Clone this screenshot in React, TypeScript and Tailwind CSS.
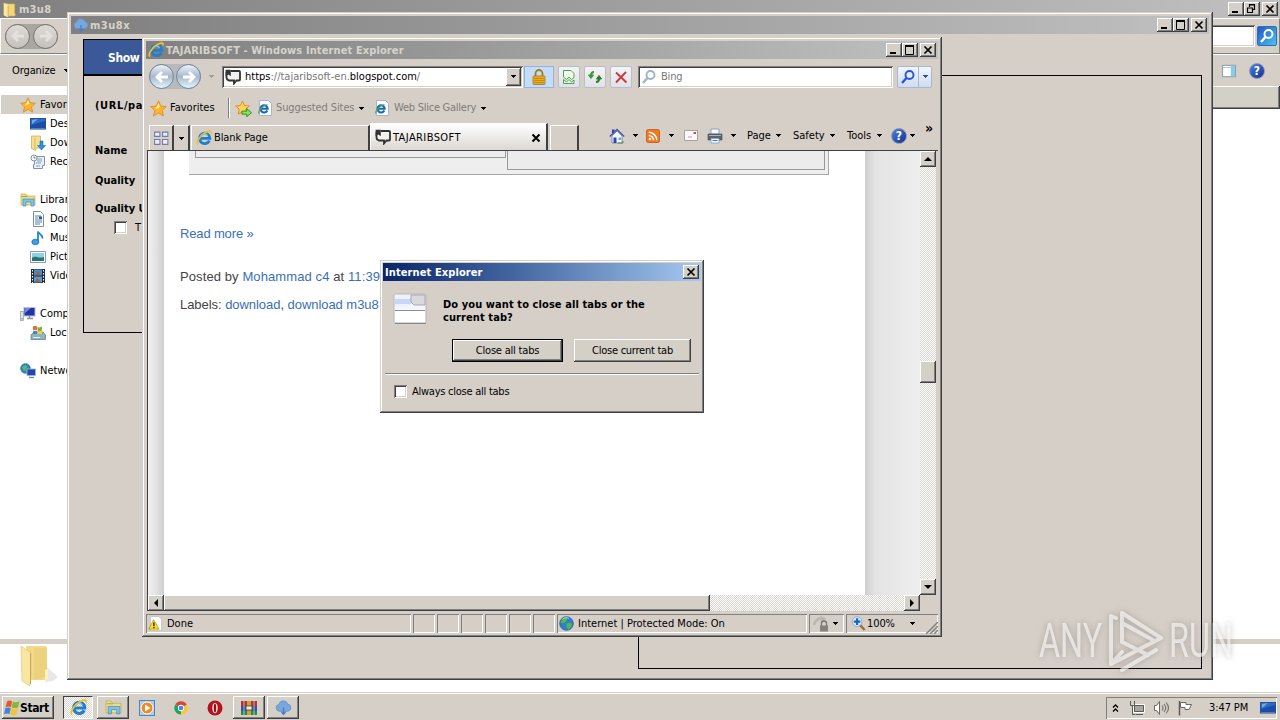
import type { ReactNode } from "react";
import clsx from "clsx";

const raised = "bg-[#d4d0c8] shadow-[inset_-1px_-1px_0_#404040,inset_1px_1px_0_#fff,inset_-2px_-2px_0_#808080]";
const frame = "bg-[#d6cfc8] shadow-[inset_-1px_-1px_0_#404040,inset_1px_1px_0_#d4d0c8,inset_-2px_-2px_0_#808080,inset_2px_2px_0_#fff]";
const sunken = "shadow-[inset_1px_1px_0_#808080,inset_-1px_-1px_0_#fff]";
const field = "bg-white shadow-[inset_1px_1px_0_#808080,inset_-1px_-1px_0_#fff,inset_2px_2px_0_#404040,inset_-2px_-2px_0_#d4d0c8]";
const checker = "bg-[repeating-conic-gradient(#fff_0_25%,#d9d5ce_0_50%)] bg-[length:2px_2px]";

type IconProps = { className?: string };

function Svg({ className, children, box = "0 0 16 16" }: IconProps & { children: ReactNode; box?: string }) {
  return (
    <svg viewBox={box} className={clsx("shrink-0", className ?? "size-4")} fill="none">
      {children}
    </svg>
  );
}

const IeIcon = ({ className }: IconProps) => (
  <Svg className={className}>
    <path d="M13.400 10.600A5.200 5.200 0 1 1 13.900 8.400H5" stroke="#1f7fd0" strokeWidth="2.900" />
    <path d="M4.800 6.200a3.800 3.800 0 0 1 6.800-.4" stroke="#6fd0fa" strokeWidth="1.300" />
    <path d="M2 14.500C-1 12.500 5 4 12.200 1.300c2.600-1 3.400.2 2.600 2.200" stroke="#f0bf2c" strokeWidth="1.700" />
  </Svg>
);

const IePageIcon = ({ className }: IconProps) => (
  <Svg className={className}>
    <path d="M2.500.5h9l3 3v12h-12z" fill="#fdfdfd" stroke="#a9b5c4" />
    <path d="M10.300 10.500a3.600 3.600 0 1 1 .4-1.700H4.500" stroke="#1769b8" strokeWidth="2.100" />
    <path d="M2 13.500c-1.500-1.500 3-8 8.500-9" stroke="#5aa93a" strokeWidth="1.100" />
  </Svg>
);

const StarIcon = ({ className }: IconProps) => (
  <Svg className={className}>
    <path d="M8 .8l2.200 4.900 5.200.5-3.900 3.600 1.200 5.300L8 12.300l-4.700 2.800 1.200-5.300L.6 6.200l5.200-.5z" fill="#fbb52c" stroke="#dd8a24" strokeWidth=".8" />
    <path d="M8 3l1.300 3.600L5 9z" fill="#fff0a0" />
  </Svg>
);

const AddStarIcon = () => (
  <Svg className="size-[17px]">
    <path d="M7 1l1.900 4.200 4.500.4-3.400 3.100 1 4.600-4-2.400-4 2.400 1-4.600L.6 5.600l4.500-.4z" fill="#fbd458" stroke="#d9821a" strokeWidth=".8" />
    <path d="M6.500 10.500h4.500V8l4.500 4-4.500 3.700v-2.400H6.500z" fill="#8fe05a" stroke="#2c8a22" strokeWidth=".9" />
  </Svg>
);

const CloudIcon = ({ className }: IconProps) => (
  <Svg className={className}>
    <path d="M4 11.500a3.300 3.300 0 0 1-.3-6.500A4.300 4.300 0 0 1 12 4.800a3.400 3.400 0 0 1 .2 6.700z" fill="#78a6df" stroke="#6593d0" strokeWidth=".8" />
    <path d="M8 8v6M6 12l2 2.500 2-2.500" stroke="#4b7fc6" strokeWidth="1.300" />
  </Svg>
);

const FolderIcon = ({ className }: IconProps) => (
  <Svg className={className}>
    <path d="M2 1l5 1h6.500v10l1 1-1 2H7l-1 1-4-2z" fill="#f3d778" stroke="#d2ae4a" strokeWidth=".6" />
    <path d="M2 1l4.500 3v12L2 14z" fill="#fbeaa4" />
    <path d="M6.500 4v11" stroke="#c8a445" strokeWidth=".8" />
  </Svg>
);

const BigFolderIcon = () => (
  <svg viewBox="0 0 40 44" className="h-11 w-10">
    <path d="M27 22l10 9c1 3-5 6-12 6z" fill="#d9d9d9" opacity=".6" />
    <path d="M6 1h20l1 2v24l1 3v4l-5 1H10z" fill="#f0d987" />
    <path d="M14 3h13v28l-13 4z" fill="#ecd27c" />
    <path d="M25 25l3-1v10l-3 1z" fill="#fff3c4" />
    <path d="M1 1l9 6q1 1 1 3v18l-1 13L2 36z" fill="#f8e6a2" stroke="#dcc06a" strokeWidth=".6" />
    <path d="M10.500 8v31" stroke="#c7a654" />
  </svg>
);

const LibraryIcon = ({ className }: IconProps) => (
  <Svg className={className}>
    <path d="M1 2h5l1 2h8v9H1z" fill="#f5dc84" stroke="#c9a84a" strokeWidth=".7" />
    <path d="M3 7h11v7h-3v-4H6v4H3z" fill="#7cc4ec" stroke="#3d8fc4" strokeWidth=".7" />
    <path d="M1.500 4.500h6" stroke="#7cb84a" />
  </Svg>
);

const MonitorIcon = ({ className }: IconProps) => (
  <Svg className={className}>
    <rect x=".5" y="2.500" width="15" height="10.500" fill="#2a6ccc" stroke="#27508f" />
    <path d="M1 12.500V9L15 5v7.500z" fill="#1d4ca6" />
    <path d="M2 4l6-1-6 5z" fill="#6faaf0" />
    <path d="M1 12.800h14" stroke="#6a8fc0" />
  </Svg>
);

const DownloadsIcon = () => (
  <Svg>
    <path d="M1.500 1h9v12h-4l-1 2.500-4-2z" fill="#f6df8e" stroke="#c9a84a" strokeWidth=".7" />
    <path d="M5 3v11" stroke="#d8b95c" />
    <path d="M10 6h3v4.500h2.500l-4 4.500-4-4.500H10z" fill="#2f8fe0" stroke="#1769b8" strokeWidth=".6" />
  </Svg>
);

const RecentIcon = () => (
  <Svg>
    <path d="M4.500 2.500h10v9h-2v3h-9v-4h1z" fill="#eaf0f6" stroke="#7f94aa" />
    <path d="M7 5h5M7 7h5M6 9h5M6 12h4" stroke="#7fa0c4" />
    <circle cx="4" cy="4" r="3" fill="#f6f9fc" stroke="#8597a8" />
    <path d="M4 2.500V4h1.500" stroke="#555" strokeWidth=".8" />
  </Svg>
);

const DocumentIcon = () => (
  <Svg>
    <path d="M3.500.5h7l3 3v12h-10z" fill="#fff" stroke="#7f8fa4" />
    <path d="M5 5h6M5 7h3M5 9h7M5 11h7M5 13h5" stroke="#557fb5" />
    <path d="M9 5.500h3v2.500H9z" fill="#31549a" />
  </Svg>
);

const MusicIcon = () => (
  <Svg>
    <path d="M8 12V1.500c1 3 5 3 4.500 7" stroke="#2586cf" strokeWidth="1.800" />
    <ellipse cx="5.300" cy="12" rx="3.500" ry="2.800" fill="#3c9fe2" stroke="#1769b8" strokeWidth=".7" />
  </Svg>
);

const PictureIcon = () => (
  <Svg>
    <path d="M.5 2.500h15v11H.5z" fill="#fff" stroke="#8d9aa8" />
    <path d="M2 4h12v8H2z" fill="#8cd0ee" />
    <path d="M2 9c4-3 6 1 12-1v4H2z" fill="#28766a" />
  </Svg>
);

const VideoIcon = () => (
  <Svg>
    <path d="M1 1h14v14H1z" fill="#242c38" />
    <path d="M4 1.500h8v6H4z" fill="#3f8fd0" />
    <path d="M4 8.500h8v6H4z" fill="#4aa0d8" />
    <path d="M5 7l3-4 3 4zM5 14l2-4 4 4z" fill="#b65a35" />
    <path d="M2.500 2v13M13.500 2v13" stroke="#fff" strokeDasharray="1.500 1.500" />
  </Svg>
);

const ComputerIcon = () => (
  <Svg>
    <rect x="4" y="1.500" width="11" height="8.500" fill="#2332a5" stroke="#b6bec8" />
    <path d="M5 2h6l-6 5z" fill="#6f88ea" />
    <path d="M7 12.500h6M9.500 10v2" stroke="#8a949e" strokeWidth="1.500" />
    <rect x=".5" y="5.500" width="3" height="9" fill="#e0e4e8" stroke="#8d98a4" strokeWidth=".7" />
    <path d="M2 12v1.500" stroke="#43b02a" />
  </Svg>
);

const FlagIcon = ({ className }: IconProps) => (
  <Svg className={className}>
    <path d="M3 1.500C5 .2 6.500.4 8 1.200L7 7.200C5.300 6.400 3.300 6.400 1.500 7.400z" fill="#e8562a" />
    <path d="M8.800 1.600c2 .9 4.200.8 6.700-.4l-1.500 6c-2 1.100-4.300 1-6.200.3z" fill="#86b832" />
    <path d="M1.300 8.300c1.700-1 3.800-1 5.500-.2l-1.300 6c-1.700-.9-3.700-.8-5.500.2z" fill="#3f86d8" />
    <path d="M7.600 8.500c2 .8 4.100.8 6.200-.3l-1.400 6c-2 1.100-4.200 1.100-6.100.3z" fill="#f7c32c" />
  </Svg>
);

const DriveIcon = () => (
  <Svg>
    <path d="M1 10l3-3h9l2.500 3v4.500H1z" fill="#8fb4bc" stroke="#587a88" strokeWidth=".7" />
    <path d="M3 12.500h7" stroke="#dff1ff" />
    <path d="M3 1.500c2-1 3-.8 4 0v4c-1-.6-2.500-.6-4 0z" fill="#ef6a2c" />
    <path d="M7.500 2c1.500.6 3 .5 4.500-.4v4c-1.500.8-3 .9-4.500.3z" fill="#7cb342" />
    <path d="M7.500 6.200c1.500.6 3 .5 4.500-.3v3H7.500z" fill="#fbc72f" />
    <path d="M3 6.300c1.500-.8 3-.8 4-.1v2.700H3z" fill="#3f86d8" />
  </Svg>
);

const GlobeIcon = ({ className }: IconProps) => (
  <Svg className={className}>
    <circle cx="8" cy="8" r="7.300" fill="#2c7ed0" stroke="#1c4f94" strokeWidth=".7" />
    <path d="M3 4c2-3 5-2.500 6-1L7.500 6 4 8 1.500 7zM8 8l4-1 2 2-2 4-2.500 1.500L8 11z" fill="#54b848" />
    <path d="M4 3.500c2-2 5-2 6.500-1" stroke="#bfe8ff" />
  </Svg>
);

const NetworkIcon = () => (
  <Svg>
    <circle cx="5.500" cy="5.500" r="4.800" fill="#2c8ad0" stroke="#1c6094" strokeWidth=".7" />
    <path d="M2 4l4-2 1 3-3 3zM6 7l3-1v3l-2 1z" fill="#63be4c" />
    <rect x="7" y="6" width="8.500" height="6.500" fill="#1d48b4" stroke="#a8b4c0" strokeWidth=".8" />
    <path d="M9 14.500h5" stroke="#7d8894" strokeWidth="1.400" />
  </Svg>
);

const ChatIcon = ({ className }: IconProps) => (
  <Svg className={className}>
    <path d="M6 2h8q1 0 1 1v7.500q0 1-1 1h-2.500l-2.500 3v-3H4q-2.500-.5-2.500-3.500V3" fill="#f4f2ee" stroke="#333" strokeWidth="1.800" />
    <path d="M.6.8h5.200v6.500L3.300 5.500.6 7.300z" fill="#333" />
  </Svg>
);

const LockIcon = () => (
  <Svg className="size-4">
    <path d="M4.500 8V4.500a3.500 3.500 0 0 1 7 0V8" stroke="#a07c1c" strokeWidth="1.800" />
    <rect x="2" y="7" width="12" height="8.500" rx=".8" fill="#e8ad22" stroke="#a8760c" strokeWidth=".8" />
    <path d="M3 9.500h10M3 11.500h10M3 13.500h10" stroke="#bb8310" strokeWidth=".8" />
  </Svg>
);

const CompatIcon = () => (
  <Svg>
    <path d="M2.500 1.500h7.500l3 3v4l-2.500 2-2.500-2.500-2.500 2.500-3-2.500zM2.500 10.500l3 2.500L8 10.500l2.500 2.500 2.500-2v3.500H2.500z" fill="#eefaea" stroke="#3c9a3c" strokeWidth=".9" />
  </Svg>
);

const RefreshIcon = () => (
  <Svg>
    <path d="M1.500 6h5L4 9.500z" fill="#3a9a34" stroke="#3a9a34" />
    <path d="M4 6.500c0-2.500.5-3.500 3-3.500" stroke="#3a9a34" strokeWidth="2" />
    <path d="M9.500 10h5L12 6.500z" fill="#267c28" stroke="#267c28" />
    <path d="M12 9.500c0 2.500-.5 3.500-3 3.500" stroke="#267c28" strokeWidth="2" />
  </Svg>
);

const StopIcon = () => (
  <Svg>
    <path d="M3 3.500l10.500 10M13 3L3 13.500" stroke="#c83a46" strokeWidth="1.900" />
  </Svg>
);

const SearchIcon = ({ className, color = "#2358d8" }: IconProps & { color?: string }) => (
  <Svg className={className}>
    <circle cx="9.500" cy="6" r="4" stroke={color} strokeWidth="1.900" />
    <path d="M6.500 9L2 14" stroke={color} strokeWidth="2.400" />
  </Svg>
);

const HomeIcon = () => (
  <Svg>
    <path d="M3 1.500h2.500v4H3z" fill="#3b3bb8" />
    <path d="M3 8l5-5 5 5v7H3z" fill="#f5f7ff" stroke="#6c7ca8" strokeWidth=".8" />
    <path d="M.8 8.500L8 1.500l7.200 7" stroke="#3f58b0" strokeWidth="1.300" />
    <path d="M4.500 9.500h3V15h-3z" fill="#2847c0" />
    <path d="M9.500 9.500h2.500V12H9.500z" fill="#6ba8e8" />
    <path d="M9 15h5v-2" stroke="#4a9a3a" />
  </Svg>
);

const RssIcon = () => (
  <Svg className="size-[14px]">
    <rect x=".5" y=".5" width="15" height="15" rx="2.500" fill="#f07a24" stroke="#c9560f" />
    <circle cx="4.500" cy="11.500" r="1.400" fill="#fff" />
    <path d="M3.200 7.500a5.200 5.200 0 0 1 5.300 5.300M3.200 3.800a9 9 0 0 1 9 9" stroke="#fff" strokeWidth="1.700" />
  </Svg>
);

const MailIcon = () => (
  <Svg box="0 0 14 11" className="h-[11px] w-[14px]">
    <path d="M.5.5h13v10H.5z" fill="#fafafa" stroke="#a8a29c" />
    <path d="M9.500 2H12v2H9.500z" fill="#d84a4a" />
    <path d="M4 7h4" stroke="#c99" />
  </Svg>
);

const PrinterIcon = () => (
  <Svg>
    <path d="M4 1h8v5H4z" fill="#f4f8fc" stroke="#8492a4" strokeWidth=".8" />
    <path d="M1 6h14v6H1z" fill="#5c646e" stroke="#3f464e" strokeWidth=".6" />
    <path d="M2 7.500h12" stroke="#a8b0ba" />
    <path d="M4 10.500h8V15H4z" fill="#f4f8fc" stroke="#7aa2d0" strokeWidth=".8" />
    <path d="M5.500 12.500h5" stroke="#3f7cc4" />
  </Svg>
);

function HelpIcon({ className }: IconProps) {
  return (
    <span className={clsx("flex size-4 shrink-0 items-center justify-center rounded-full border border-[#8d99b4] bg-linear-to-br from-[#5480dc] to-[#122f94] text-[12px] leading-none font-bold text-white", className)}>
      ?
    </span>
  );
}

const WarnPageIcon = () => (
  <Svg className="size-[15px]">
    <path d="M2.500.5h9l3 3v12h-12z" fill="#fff" stroke="#c4c4c4" />
    <path d="M6 4L.8 14h11z" fill="#fbe022" stroke="#a8920c" strokeWidth=".8" />
    <path d="M6.300 7v3.700M6.300 11.500V13" stroke="#222" strokeWidth="1.400" />
  </Svg>
);

function Caret({ className }: IconProps) {
  return (
    <svg viewBox="0 0 5 3" className={clsx("h-[3px] w-[5px] shrink-0", className)} shapeRendering="crispEdges">
      <path d="M0 0h5L2.500 3z" fill="currentColor" />
    </svg>
  );
}

function Glyph({ kind }: { kind: string }) {
  return (
    <svg viewBox="0 0 16 14" className="h-[14px] w-4" fill="none" stroke="#000">
      {kind === "min" && <path d="M4 10h6" strokeWidth="2" />}
      {kind === "max" && (
        <>
          <path d="M3.500 3v8.500h8V3" />
          <path d="M3 3h9" strokeWidth="2" />
        </>
      )}
      {kind === "restore" && <path d="M5.500 5V2.500h5v5H9M5 3h6M3.500 6v4.500h5V6M3 6h6" strokeWidth="1.200" />}
      {kind === "close" && <path d="M4.500 3.500l7 7M11.500 3.500l-7 7" strokeWidth="1.700" />}
    </svg>
  );
}

function WindowButtons({ middle = "max" }: { middle?: string }) {
  return (
    <div className="ml-auto flex shrink-0">
      <button className={raised}><Glyph kind="min" /></button>
      <button className={raised}><Glyph kind={middle} /></button>
      <button className={clsx(raised, "ml-[2px]")}><Glyph kind="close" /></button>
    </div>
  );
}

function TitleBar({ icon, title, middle, className, tracking }: { icon: ReactNode; title: string; middle?: string; className?: string; tracking?: string }) {
  return (
    <div className={clsx("flex shrink-0 items-center bg-linear-to-r from-[#808080] to-[#c0c0c0]", className)}>
      {icon}
      <span className={clsx("pt-[2px] text-[11px] font-bold text-[#d6d2ca]", tracking)}>{title}</span>
      <WindowButtons middle={middle} />
    </div>
  );
}

function Arrow({ flip, muted }: { flip?: boolean; muted?: boolean }) {
  return (
    <span className={clsx("flex size-[25px] items-center justify-center rounded-full border", muted ? "border-[#77736e] bg-linear-to-b from-[#dedbd7] to-[#c4c1bd]" : "border-[#71849a] bg-linear-to-b from-[#eef3f9] via-[#a8b8cc] to-[#e2f5fb]")}>
      <svg viewBox="0 0 16 16" className={clsx("size-4", flip && "-scale-x-100")} fill="none">
        <path d="M14 8H3.500M8 3L3 8l5 5" stroke={muted ? "#e3e1dd" : "#fff"} strokeWidth="2.800" />
      </svg>
    </span>
  );
}

const places = [
  { name: "Favorites", icon: <StarIcon />, top: true },
  { name: "Desktop", icon: <MonitorIcon /> },
  { name: "Downloads", icon: <DownloadsIcon /> },
  { name: "Recent", icon: <RecentIcon /> },
  null,
  { name: "Libraries", icon: <LibraryIcon />, top: true },
  { name: "Documents", icon: <DocumentIcon /> },
  { name: "Music", icon: <MusicIcon /> },
  { name: "Pictures", icon: <PictureIcon /> },
  { name: "Videos", icon: <VideoIcon /> },
  null,
  { name: "Computer", icon: <ComputerIcon />, top: true },
  { name: "Local Disk", icon: <DriveIcon /> },
  null,
  { name: "Network", icon: <NetworkIcon />, top: true },
];

function ExplorerWindow() {
  return (
    <div className="absolute inset-x-0 top-0 flex h-[693px] flex-col bg-white">
      <TitleBar className="h-[18px] pr-[2px]" middle="restore" icon={<FolderIcon className="mx-[2px] size-[15px]" />} title="m3u8" tracking="tracking-[0.3px]" />
      <div className="flex h-[36px] items-center border border-t-white border-r-[#808080] border-b-[#808080] border-l-white bg-[#d6cfc8] pr-[2px] pl-1">
        <div className="flex gap-[3px] rounded-full bg-[#a9a6a2]">
          <Arrow muted />
          <Arrow muted flip />
        </div>
        <div className={clsx(field, "ml-auto h-[22px] w-[160px]")} />
        <span className="ml-[2px] flex size-5 items-center justify-center rounded-[2px] border border-[#2d6fb4] bg-linear-to-br from-[#2b50c8] to-[#4bc6ee]">
          <SearchIcon color="#fff" />
        </span>
      </div>
      <div className="flex h-[32px] items-center border-t border-white bg-[#d6cfc8] pl-3">
        <span className="w-[52px] pt-[2px] text-[11px] tracking-[-0.1px]">Organize</span>
        <Caret />
        <Svg className="mr-3 ml-auto h-[14px] w-4">
          <path d="M.5 1.500h15v13H.5z" fill="#fff" stroke="#6f8fa8" />
          <path d="M10 2h5v12h-5z" fill="#8ccbe4" />
          <path d="M1 4h9" stroke="#a9c4d4" />
        </Svg>
        <HelpIcon className="mr-[15px]" />
      </div>
      <div className="flex grow">
        <div className="w-[67px] shrink-0 overflow-hidden pt-[9px]">
          {places.map((place, i) =>
            place ? (
              <div key={place.name} className={clsx("ml-px flex h-[19px] items-center gap-1 text-[11px]", place.top ? "pl-[19px]" : "pl-[29px]", i === 0 && "bg-[#d4d0c8]")}>
                {place.icon}
                <span className="pt-[2px]">{place.name}</span>
              </div>
            ) : (
              <div key={i} className="h-[19px]" />
            )
          )}
        </div>
        <div className={clsx(raised, "h-[23px] grow")} />
      </div>
      <div className="h-[54px] border-t-[5px] border-[#d6cfc8] pt-px pl-5">
        <BigFolderIcon />
      </div>
    </div>
  );
}

function CheckBox() {
  return <span className={clsx(field, "inline-block size-[13px] shrink-0")} />;
}

function DownloaderWindow() {
  return (
    <div className={clsx(frame, "absolute top-[12px] left-[67px] flex h-[668px] w-[1146px] flex-col p-1")}>
      <TitleBar className="h-[18px] pr-[2px]" icon={<CloudIcon className="mr-px ml-[2px] size-4" />} title="m3u8x" tracking="tracking-[0.5px]" />
      <div className="flex grow pt-[5px] pl-3">
        <div className="h-[294px] w-[555px] border border-black">
          <div className="flex h-[36px] items-center border-b-2 border-black bg-[#3b5998] pt-[2px] pl-6 text-[12px] font-bold tracking-[-0.4px] text-white">Show</div>
          <div className="flex flex-col pl-[11px] text-[11px] leading-[14px] font-bold">
            <span className="mt-[23px] tracking-[0.6px]">(URL/path)</span>
            <span className="mt-[31px] tracking-[0.1px]">Name</span>
            <span className="mt-4">Quality</span>
            <span className="mt-[14px]">Quality URL</span>
            <label className="mt-[3px] flex items-center gap-2 pl-[19px] font-normal tracking-[1px]">
              <CheckBox /> <span className="pt-[2px]">TS</span>
            </label>
          </div>
        </div>
        <div className="mt-9 h-[594px] w-[564px] border border-black" />
      </div>
    </div>
  );
}

function ToolButton({ children }: { children: ReactNode }) {
  return (
    <span className="flex h-[22px] w-[22px] items-center justify-center rounded-[2px] border border-[#b5bfd0] bg-linear-to-b from-[#f4f4f6] to-[#e2e1e6]">
      {children}
    </span>
  );
}

function AddressRow() {
  return (
    <div className="flex h-[35px] shrink-0 items-center pl-[3px] text-[11px]">
      <div className="flex w-[73px] shrink-0 items-center">
        <div className="flex gap-[2px] rounded-full bg-[#b7b9bd]">
          <Arrow />
          <Arrow flip />
        </div>
        <Caret className="ml-[7px] h-1 w-[7px] text-[#a29d97]" />
      </div>
      <div className={clsx(field, "flex h-[22px] w-[301px] items-center pl-[3px]")}>
        <ChatIcon className="mr-[4px] size-4" />
        <span className="pt-[2px] text-[#777]">
          <span className="text-black">https</span>://tajaribsoft-en.<span className="text-black">blogspot.com</span>/
        </span>
        <span className={clsx(raised, "mr-[2px] ml-auto flex h-[18px] w-[15px] items-center justify-center")}>
          <Caret className="h-1 w-[7px]" />
        </span>
      </div>
      <div className="ml-px flex h-[22px] w-[30px] items-center justify-center border border-[#8db4ec] bg-[#c6dcfb]">
        <LockIcon />
      </div>
      <div className="ml-[4px] flex gap-1">
        <ToolButton><CompatIcon /></ToolButton>
        <ToolButton><RefreshIcon /></ToolButton>
        <ToolButton><StopIcon /></ToolButton>
      </div>
      <div className={clsx(field, "ml-[6px] flex h-[22px] w-[255px] items-center pl-[3px] text-[#777]")}>
        <SearchIcon color="#9bb4cc" />
        <span className="ml-1 pt-[2px] tracking-[-0.2px]">Bing</span>
      </div>
      <div className="ml-1 flex h-[22px] w-[35px] items-center rounded-[2px] border border-[#a9b8d2] bg-linear-to-b from-[#f2f5fb] to-[#cfdcf2]">
        <span className="flex h-full w-[21px] items-center justify-center border-r border-[#a9b8d2]"><SearchIcon /></span>
        <Caret className="ml-1 text-[#2050a0]" />
      </div>
    </div>
  );
}

function FavoritesRow() {
  return (
    <div className="flex h-[28px] shrink-0 items-center pl-1 text-[11px]">
      <StarIcon className="size-[17px]" />
      <span className="ml-[3px] w-[58px] pt-px">Favorites</span>
      <span className="mr-[5px] h-5 w-[2px] border-l border-[#808080] bg-white" />
      <AddStarIcon />
      <IePageIcon className="ml-[5px] size-4" />
      <span className="ml-[3px] w-[83px] pt-px tracking-[-0.1px] text-[#807c78]">Suggested Sites</span>
      <Caret />
      <IePageIcon className="ml-[10px] size-4" />
      <span className="ml-[4px] w-[87px] pt-px tracking-[-0.25px] text-[#807c78]">Web Slice Gallery</span>
      <Caret />
    </div>
  );
}

function TabsRow() {
  return (
    <div className="flex h-[28px] shrink-0 items-end text-[11px]">
      <div className="ml-[3px] flex h-[25px] w-[25px] items-center justify-center border-t border-r-2 border-l border-t-white border-r-[#404040] border-l-white">
        <Svg className="size-[17px]">
          <path d="M1.500 2h5v4h-5zM9 2h5v4H9zM1.500 9h5v4.500h-5zM9 9h5v4.500H9z" fill="#eceffa" stroke="#6f7cac" />
        </Svg>
      </div>
      <div className="flex h-[25px] w-4 items-center justify-center border-t border-r-2 border-white border-r-[#404040]"><Caret /></div>
      <div className="ml-px flex h-[25px] w-[179px] items-center border-t border-r-2 border-l border-t-white border-r-[#404040] border-l-white pl-1">
        <IeIcon className="size-4" />
        <span className="ml-[2px] pt-px tracking-[-0.1px]">Blank Page</span>
      </div>
      <div className="flex h-[27px] w-[178px] items-center border-t border-r-2 border-l border-t-white border-r-[#404040] border-l-white bg-linear-to-b from-white to-[#dcd8d2] pl-1">
        <ChatIcon className="size-4" />
        <span className="ml-[2px] pt-[2px] tracking-[0.4px]">TAJARIBSOFT</span>
        <Svg className="mt-[2px] mr-[5px] ml-auto size-[10px]" box="0 0 10 10">
          <path d="M1.500 1.500l7 7M8.500 1.500l-7 7" stroke="#000" strokeWidth="2" />
        </Svg>
      </div>
      <div className="ml-[2px] h-[25px] w-[29px] border-t border-r-2 border-l border-t-white border-r-[#404040] border-l-white" />
      <div className="ml-[30px] flex h-[28px] w-[326px] items-center pb-px">
        <HomeIcon />
        <Caret className="ml-2" />
        <span className="ml-[8px]"><RssIcon /></span>
        <Caret className="ml-[9px]" />
        <span className="ml-[10px]"><MailIcon /></span>
        <span className="ml-[9px]"><PrinterIcon /></span>
        <Caret className="ml-2" />
        <span className="ml-[11px] w-[29px] pt-[2px]">Page</span>
        <Caret />
        <span className="ml-3 w-[37px] pt-[2px]">Safety</span>
        <Caret />
        <span className="ml-[12px] w-[30px] pt-[2px]">Tools</span>
        <Caret />
        <HelpIcon className="ml-[9px]" />
        <Caret className="ml-[3px]" />
        <span className="ml-[10px] pb-[14px] text-[14px] font-bold">»</span>
      </div>
    </div>
  );
}

function ScrollButton({ path, className }: { path: string; className?: string }) {
  return (
    <span className={clsx(raised, "flex size-4 shrink-0 items-center justify-center", className)}>
      <svg viewBox="0 0 8 8" className="size-2"><path d={path} fill="#000" /></svg>
    </span>
  );
}

function BlogPage() {
  return (
    <div className="flex h-[444px] grow overflow-hidden bg-[#eee]">
      <div className="w-4 shrink-0 bg-linear-to-r from-[#f0f0f0] via-[#e2e2e2] to-[#cfcfcf]" />
      <div className="w-[701px] shrink-0 bg-white px-4 font-['Liberation_Sans',Arial,sans-serif] text-[13px] leading-4 tracking-[-0.05px] text-[#444]">
        <div className="ml-[9px] flex h-6 w-[640px] border-r border-b border-[#a8a8a8] bg-[#eee] pr-[3px] pl-[6px]">
          <div className="h-[7px] w-[311px] border-r border-b border-l border-[#999]" />
          <div className="ml-px h-[19px] grow border-r border-b border-l border-[#999] bg-[#ececec]" />
        </div>
        <div className="mt-[51px] tracking-[-0.15px] text-[#3a6fb8]">Read more »</div>
        <div className="mt-[27px] w-[199px] tracking-[0.1px]">
          Posted by <span className="text-[#3a6fb8]">Mohammad c4</span> at <span className="text-[#3a6fb8]">11:39</span>
        </div>
        <div className="mt-3">
          Labels: <span className="text-[#3a6fb8]">download</span>, <span className="text-[#3a6fb8]">download m3u8</span>
        </div>
      </div>
      <div className="grow bg-linear-to-r from-[#cfcfcf] via-[#e4e4e4] via-20% to-[#eee]" />
    </div>
  );
}

function StatusBar() {
  return (
    <div className="mt-[3px] flex h-[19px] shrink-0 gap-[2px] text-[11px]">
      <div className={clsx(sunken, "flex w-[265px] items-center gap-1 pl-[2px]")}>
        <WarnPageIcon />
        <span className="pt-[2px]">Done</span>
      </div>
      {[0, 1, 2, 3, 4, 5].map((n) => (
        <div key={n} className={clsx(sunken, "w-[22px]")} />
      ))}
      <div className={clsx(sunken, "flex w-[250px] items-center pl-[2px]")}>
        <GlobeIcon className="size-[15px]" />
        <span className="ml-1 pt-[2px]">Internet | Protected Mode: On</span>
      </div>
      <div className={clsx(sunken, "flex w-[35px] items-center gap-1 pl-1")}>
        <Svg>
          <path d="M1 9c1-5 6-8 9-6M7 1l4 2-3 3" stroke="#b9b7b4" strokeWidth="2.600" />
          <path d="M8.500 10V7.500a2.500 2.500 0 0 1 5 0V10" stroke="#777" strokeWidth="1.300" />
          <rect x="7" y="9.500" width="8" height="6" fill="#85827e" />
        </Svg>
        <Caret />
      </div>
      <div className={clsx(sunken, "flex grow items-center pl-[5px]")}>
        <Svg className="mr-px size-[15px]">
          <path d="M9.500 9.500l5 5.500" stroke="#a36a3c" strokeWidth="2.500" />
          <circle cx="6.500" cy="6" r="5.200" fill="#d5ecff" stroke="#8ba8c4" />
          <path d="M6.500 2.500v7M3 6h7" stroke="#1762c8" strokeWidth="2.200" />
        </Svg>
        <span className="w-[43px] pt-[2px] tracking-[-0.1px]">100%</span>
        <Caret />
        <Svg className="mt-2 ml-auto size-3" box="0 0 12 12">
          <path d="M0 12L12 0M4 12l8-8M8 12l4-4" stroke="#808080" strokeWidth="1.500" />
        </Svg>
      </div>
    </div>
  );
}

function BrowserWindow() {
  return (
    <div className={clsx(frame, "absolute top-[37px] left-[142px] flex h-[600px] w-[800px] flex-col p-1")}>
      <TitleBar className="h-[18px] pr-[2px]" icon={<IeIcon className="mx-[2px] size-4" />} title="TAJARIBSOFT - Windows Internet Explorer" tracking="tracking-[0.11px]" />
      <AddressRow />
      <FavoritesRow />
      <TabsRow />
      <div className="ml-px flex h-[461px] shrink-0 flex-col border-t border-l border-[#404040]">
        <div className="flex h-[444px]">
          <BlogPage />
          <div className={clsx(checker, "mr-[2px] flex w-4 shrink-0 flex-col")}>
            <ScrollButton path="M0 6l4-4 4 4z" />
            <div className={clsx(raised, "mt-[194px] h-[22px]")} />
            <ScrollButton path="M0 2l4 4 4-4z" className="mt-auto" />
          </div>
        </div>
        <div className="flex h-4">
          <div className={clsx(checker, "flex w-[772px]")}>
            <ScrollButton path="M6 0L2 4l4 4z" />
            <div className={clsx(raised, "w-[546px]")} />
            <ScrollButton path="M2 0l4 4-4 4z" className="ml-auto" />
          </div>
        </div>
      </div>
      <StatusBar />
    </div>
  );
}

function CloseTabsDialog() {
  return (
    <div className={clsx(frame, "absolute top-[260px] left-[380px] flex h-[153px] w-[324px] flex-col p-[3px] text-[11px]")}>
      <div className="flex h-[18px] shrink-0 items-center bg-linear-to-r from-[#0a246a] to-[#a6caf0] pr-[2px] pl-[2px] font-bold text-white">
        <span className="pt-[2px] tracking-[0.1px]">Internet Explorer</span>
        <button className={clsx(raised, "ml-auto")}><Glyph kind="close" /></button>
      </div>
      <div className="flex pt-[12px] pl-[10px]">
        <svg viewBox="0 0 34 32" className="h-8 w-[34px]" fill="none">
          <rect x="1" y="1" width="32" height="29" rx="1.500" fill="#f4f6fc" stroke="#b8b6b4" />
          <path d="M2 2h16v12H2z" fill="#eef2fc" />
          <path d="M2 6h16v5H2z" fill="#c9d6f6" />
          <path d="M18 2h14v10H21l-3-3z" fill="#d9d9dc" stroke="#a8a8ac" />
          <path d="M2 17.500h30" stroke="#8c8c94" />
          <path d="M2 18h30v11H2z" fill="#fff" />
          <path d="M2 30.500h31" stroke="#8c8880" />
        </svg>
        <p className="mt-[5px] ml-[16px] leading-[13px] font-bold tracking-[0.09px]">
          Do you want to close all tabs or the
          <br />
          current tab?
        </p>
      </div>
      <div className="mt-[14px] flex gap-[11px] pl-[69px]">
        <button className={clsx(raised, "h-[23px] w-[111px] border border-black pt-px tracking-[-0.2px]")}>Close all tabs</button>
        <button className={clsx(raised, "h-[23px] w-[117px] pt-px tracking-[-0.25px]")}>Close current tab</button>
      </div>
      <hr className="mx-[2px] mt-[11px] h-[2px] border-t border-b border-t-[#808080] border-b-white" />
      <label className="mt-[8px] flex items-center gap-[5px] pl-[11px] tracking-[-0.25px]">
        <CheckBox />
        <span className="pt-px">Always close all tabs</span>
      </label>
    </div>
  );
}

function TaskIcon({ children, open }: { children: ReactNode; open?: boolean }) {
  return <div className={clsx("flex h-[23px] w-8 items-center justify-center", open && raised)}>{children}</div>;
}

function Taskbar() {
  return (
    <div className="absolute inset-x-0 bottom-0 flex h-[27px] items-center border-t border-white bg-[#d6cfc8] pt-px pl-[2px] shadow-[0_-1px_0_#d4d0c8]">
      <button className={clsx(raised, "flex h-[23px] w-[52px] items-center pl-[2px] text-[12px] font-bold tracking-[-0.4px]")}>
        <FlagIcon className="size-4" />
        Start
      </button>
      <div className={clsx(checker, "ml-[9px] flex h-[23px] w-[30px] items-center justify-center border border-t-[#404040] border-r-white border-b-white border-l-[#404040]")}>
        <IeIcon className="size-[17px]" />
      </div>
      <div className="ml-[4px] flex gap-[2px]">
        <TaskIcon open><LibraryIcon className="size-[17px]" /></TaskIcon>
        <TaskIcon>
          <Svg>
            <rect x=".5" y=".5" width="15" height="15" fill="#aacdf2" stroke="#4d84c4" />
            <circle cx="8" cy="8" r="6" fill="#f28a1c" stroke="#fff" />
            <path d="M6 4.500L11.500 8 6 11.500z" fill="#fff" />
          </Svg>
        </TaskIcon>
        <TaskIcon>
          <Svg className="size-[14px]">
            <path d="M8 8L1.400 4.200A7.500 7.500 0 0 1 14.600 4.200z" fill="#db4437" />
            <path d="M8 8L1.400 4.200A7.500 7.500 0 0 0 8 15.500z" fill="#1fa463" />
            <path d="M8 8l6.600-3.800A7.500 7.500 0 0 1 8 15.500z" fill="#fbc921" />
            <circle cx="8" cy="8" r="3.600" fill="#fff" />
            <circle cx="8" cy="8" r="2.700" fill="#4285f4" />
          </Svg>
        </TaskIcon>
        <TaskIcon>
          <Svg>
            <circle cx="8" cy="8" r="7.500" fill="#b5121b" />
            <ellipse cx="8" cy="8" rx="2.700" ry="5.300" fill="#f8eaea" />
            <ellipse cx="8" cy="8" rx="1.200" ry="4.500" fill="#9a0a12" />
          </Svg>
        </TaskIcon>
        <TaskIcon open>
          <Svg>
            <path d="M0 1h16v5H0z" fill="#b83232" />
            <path d="M0 6h16v5H0z" fill="#3652a8" />
            <path d="M0 11h16v4H0z" fill="#338a3e" />
            <path d="M6 1h4v14H6z" fill="#c9a23c" />
            <path d="M5 6h6v4H5z" fill="#f0ead8" stroke="#443" strokeWidth=".8" />
            <path d="M3 1v14M13 1v14" stroke="#ddd" strokeWidth=".7" />
          </Svg>
        </TaskIcon>
        <TaskIcon open><CloudIcon className="size-[17px]" /></TaskIcon>
      </div>
      <div className={clsx(sunken, "mr-[3px] ml-auto flex h-[22px] w-[171px] items-center pl-[6px] text-[11px]")}>
        <Svg className="h-[10px] w-[7px]" box="0 0 7 10">
          <path d="M1 4.500L3.500 2 6 4.500M1 8.500L3.500 6 6 8.500" stroke="#000" strokeWidth="1.300" />
        </Svg>
        <Svg className="ml-[10px] size-4">
          <path d="M4.500 4.500h11v8h-11z" fill="#aaa69f" stroke="#fff" />
          <path d="M5.500 5.500h9v6h-9zM7 14.500h7M1.500 1v4.500h4V1M3.500 5.500v9h3" stroke="#5d5a56" />
        </Svg>
        <Svg className="ml-2 size-4">
          <path d="M1.500 5.500h2l3-4v13l-3-4h-2z" fill="#fff" stroke="#6b6864" />
          <path d="M9 5.500q2 2.500 0 5M11 4q3.500 4 0 8M13 2.500q5 5.500 0 11" stroke="#75716c" strokeWidth="1.100" />
        </Svg>
        <Svg className="ml-2 size-4">
          <path d="M2.500 1v14.500" stroke="#5d5a56" strokeWidth="1.500" />
          <path d="M3.500 2.500H9v2h5.500L12 9.500H8v-2H3.500z" fill="#fff" stroke="#6b6864" />
        </Svg>
        <span className="ml-4 w-[51px] pt-px tracking-[-0.1px]">3:47 PM</span>
        <MonitorIcon className="size-4" />
      </div>
    </div>
  );
}

function Watermark() {
  return (
    <div className="absolute top-[606px] left-[1039px] flex h-[68px] w-[200px] items-center pt-px font-['Roboto',sans-serif] text-[49px] leading-none text-white/60 drop-shadow-[0_0_3px_rgba(90,85,80,0.6)]">
      <span className="w-[69px] origin-left scale-x-[0.66]">ANY</span>
      <svg viewBox="0 0 56 64" className="h-16 w-14 shrink-0" fill="none" stroke="currentColor" strokeWidth="4" strokeLinejoin="round" strokeLinecap="round">
        <path d="M8 9L3 7v48L53 29 14 4v29l26 13M14 14l31 17M3 55L14 43M14 61l34-20" />
      </svg>
      <span className="ml-[5px] w-[70px] origin-left scale-x-[0.66]">RUN</span>
    </div>
  );
}

export default function App() {
  return (
    <div className="relative h-[720px] w-[1280px] overflow-hidden bg-white font-['DejaVu_Sans_Condensed','DejaVu_Sans',Tahoma,sans-serif] whitespace-nowrap text-black">
      <ExplorerWindow />
      <DownloaderWindow />
      <BrowserWindow />
      <CloseTabsDialog />
      <Watermark />
      <Taskbar />
    </div>
  );
}
